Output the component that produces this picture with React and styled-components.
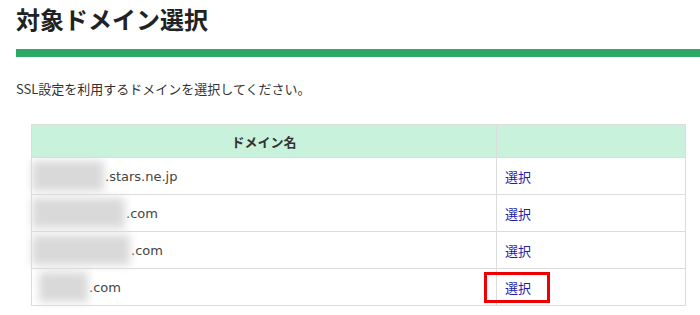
import React from 'react'
import styled, { createGlobalStyle } from 'styled-components'

const GlobalStyle = createGlobalStyle`
  html, body {
    margin: 0;
    padding: 0;
    background: #fff;
  }
  body {
    font-family: "DejaVu Sans", "Noto Sans CJK JP", sans-serif;
    color: #333;
  }
`

const Page = styled.div`
  width: 700px;
  height: 315px;
  overflow: hidden;
  padding: 0 0 0 16px;
  box-sizing: border-box;
`

const Title = styled.h1`
  margin: 0;
  padding-top: 4px;
  font-family: "Noto Sans CJK JP", sans-serif;
  font-size: 24px;
  line-height: 30px;
  font-weight: 700;
  color: #222;
`

const GreenBar = styled.div`
  height: 8px;
  margin-top: 15px;
  background: #2da866;
`

const Lead = styled.p`
  margin: 23px 0 0;
  font-family: "Noto Sans CJK JP", sans-serif;
  font-size: 13px;
  line-height: 18px;
  color: #333;
`

const Table = styled.table`
  margin: 26px 0 0 15px;
  width: 655px;
  border-collapse: collapse;
  font-size: 13px;
`

const Head = styled.th`
  height: 32px;
  padding: 0;
  background: #c9f2dd;
  border: 1px solid #dcdcdc;
  font-family: "Noto Sans CJK JP", sans-serif;
  font-weight: 700;
  font-size: 13px;
  color: #333;
  text-align: center;
  width: ${p => p.$w || 'auto'};
`

const Cell = styled.td`
  height: 36px;
  padding: 0;
  border: 1px solid #dcdcdc;
  vertical-align: middle;
  position: relative;
`

const Domain = styled.div`
  display: flex;
  align-items: center;
  height: 36px;
  padding-left: ${p => p.$indent}px;
  color: #444;
`

const Masked = styled.span`
  display: inline-block;
  width: ${p => p.$w}px;
  height: 30px;
  background: #d9d9d9;
  filter: blur(4px);
  margin-right: 1px;
`

const Pick = styled.a`
  display: inline-block;
  margin-left: 8px;
  font-family: "Noto Sans CJK JP", sans-serif;
  font-size: 13px;
  color: #1e22a8;
  text-decoration: none;
  cursor: pointer;
`

const Highlight = styled.span`
  position: absolute;
  left: -13px;
  top: 3px;
  width: 60px;
  height: 25px;
  border: 3px solid #ee0000;
`

const rows = [
  { indent: 0, mask: 72, tail: '.stars.ne.jp' },
  { indent: 0, mask: 93, tail: '.com' },
  { indent: 0, mask: 98, tail: '.com' },
  { indent: 7, mask: 49, tail: '.com', marked: true },
]

export default function App() {
  return (
    <>
      <GlobalStyle />
      <Page>
        <Title>対象ドメイン選択</Title>
        <GreenBar />
        <Lead>SSL設定を利用するドメインを選択してください。</Lead>
        <Table>
          <thead>
            <tr>
              <Head $w="464px">ドメイン名</Head>
              <Head />
            </tr>
          </thead>
          <tbody>
            {rows.map((r, i) => (
              <tr key={i}>
                <Cell>
                  <Domain $indent={r.indent}>
                    <Masked $w={r.mask} />
                    {r.tail}
                  </Domain>
                </Cell>
                <Cell>
                  {r.marked && <Highlight />}
                  <Pick>選択</Pick>
                </Cell>
              </tr>
            ))}
          </tbody>
        </Table>
      </Page>
    </>
  )
}
